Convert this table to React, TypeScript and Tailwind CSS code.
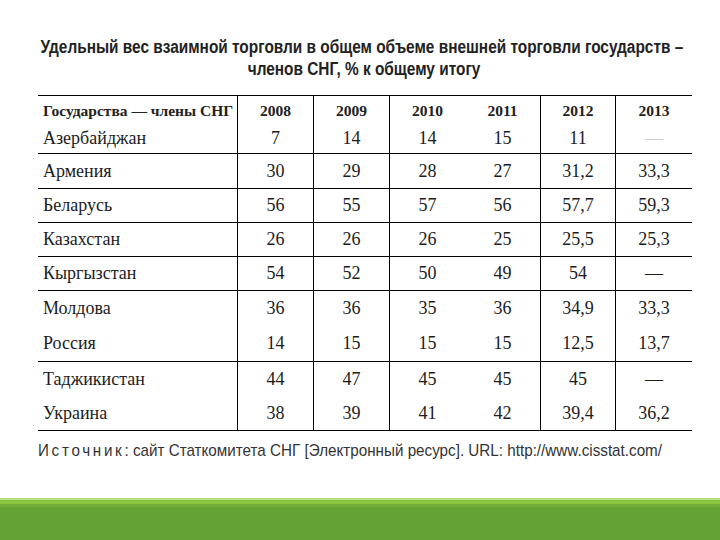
import React from 'react';

type Row = { name: string; values: string[]; faintLast?: boolean };

const groups: Row[][] = [
  [{ name: 'Азербайджан', values: ['7', '14', '14', '15', '11', '—'], faintLast: true }],
  [{ name: 'Армения', values: ['30', '29', '28', '27', '31,2', '33,3'] }],
  [{ name: 'Беларусь', values: ['56', '55', '57', '56', '57,7', '59,3'] }],
  [{ name: 'Казахстан', values: ['26', '26', '26', '25', '25,5', '25,3'] }],
  [{ name: 'Кыргызстан', values: ['54', '52', '50', '49', '54', '—'] }],
  [
    { name: 'Молдова', values: ['36', '36', '35', '36', '34,9', '33,3'] },
    { name: 'Россия', values: ['14', '15', '15', '15', '12,5', '13,7'] },
  ],
  [
    { name: 'Таджикистан', values: ['44', '47', '45', '45', '45', '—'] },
    { name: 'Украина', values: ['38', '39', '41', '42', '39,4', '36,2'] },
  ],
];

const groupHeights = ['h-[58px]', 'h-[35px]', 'h-[34px]', 'h-[34px]', 'h-[34px]', 'h-[71px]', 'h-[69px]'];
const years = ['2008', '2009', '2010', '2011', '2012', '2013'];
// no line between 2010 and 2011, none at the right edge
const colBorder = ['border-r', 'border-r', 'border-r', '', 'border-r', 'border-r', ''];
const cols = 'grid grid-cols-[200px_76px_76px_75px_76px_75px_76px]';

function Group({ rows, height, header }: { rows: Row[]; height: string; header?: boolean }) {
  const all = header ? [{ name: 'Государства — члены СНГ', values: years } as Row, ...rows] : rows;
  return (
    <div className={`${cols} ${height} border-b border-black`}>
      {[0, 1, 2, 3, 4, 5, 6].map((c) => (
        <div key={c} className={`flex flex-col border-black ${colBorder[c]}`}>
          {all.map((r, i) => {
            const isHead = header && i === 0;
            const text = c === 0 ? r.name : r.values[c - 1];
            const faint = r.faintLast && c === 6;
            return (
              <div
                key={i}
                className={`flex flex-1 items-center ${c === 0 ? 'pl-[5px]' : 'justify-center'} ${
                  isHead ? 'text-[15.5px] font-semibold text-[#222]' : 'text-[18px] text-[#1c1c1c]'
                } ${faint ? 'text-[#cdcdcd]' : ''}`}
              >
                {text}
              </div>
            );
          })}
        </div>
      ))}
    </div>
  );
}

export default function App() {
  return (
    <div className="relative h-[540px] w-[720px] overflow-hidden bg-white">
      <div className="px-[38px] pt-[36px]">
        <h1 className="flex flex-col items-center text-[18px] font-bold leading-[22px] text-[#222] [font-family:'Liberation_Sans',Arial,sans-serif]">
          <div className="shrink-0 translate-x-[2px] scale-x-[0.855] whitespace-nowrap">
            Удельный вес взаимной торговли в общем объеме внешней торговли государств –
          </div>
          <div className="translate-x-[4px] scale-x-[0.855] whitespace-nowrap">членов СНГ, % к общему итогу</div>
        </h1>

        <div className="mt-[15px] w-[654px] border-t border-black [font-family:'Liberation_Serif',serif]">
          {groups.map((g, i) => (
            <Group key={i} rows={g} height={groupHeights[i]} header={i === 0} />
          ))}
        </div>

        <p className="mt-[7px] origin-left scale-x-[0.895] whitespace-nowrap text-[17px] text-[#333] [font-family:'Liberation_Sans',Arial,sans-serif]">
          <span className="tracking-[3px]">Источник</span>: сайт Статкомитета СНГ [Электронный ресурс]. URL: http://www.cisstat.com/
        </p>
      </div>

      <div className="absolute bottom-0 left-0 right-0 h-[42px]">
        <div className="h-[2px] bg-[#b9de7f]" />
        <div className="h-[4px] bg-[#8cc540]" />
        <div className="h-[3px] bg-[#72ad3a]" />
        <div className="h-[33px] bg-[#63a336]" />
      </div>
    </div>
  );
}
